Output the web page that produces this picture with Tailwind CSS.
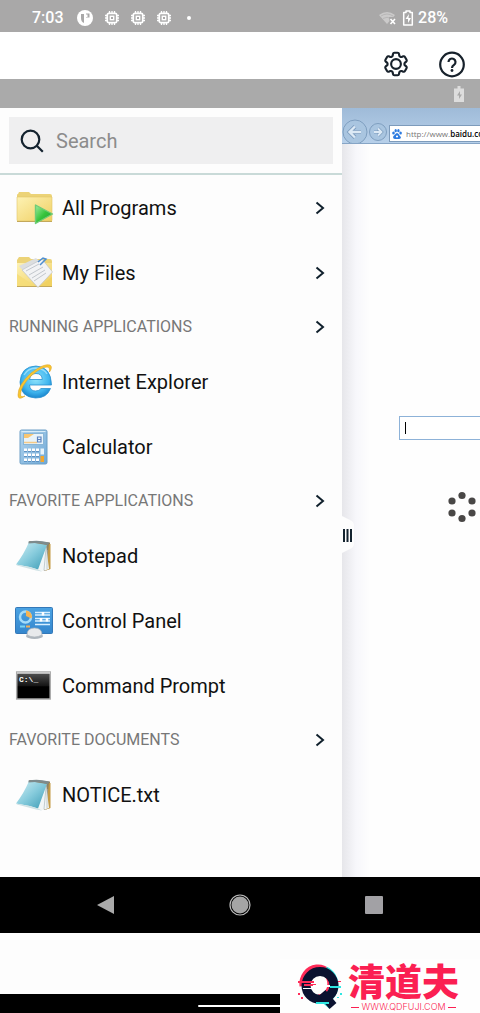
<!DOCTYPE html>
<html lang="en">
<head>
  <meta charset="UTF-8">
  <meta name="viewport" content="width=device-width, initial-scale=1.0">
  <title>Remote Desktop</title>
  <script src="https://cdn.jsdelivr.net/npm/@tailwindcss/browser@4"></script>
</head>
<body class="bg-white font-['Roboto',sans-serif] text-[#111]">
  <!-- Shared icons (kept rendered so the gradients resolve) -->
  <svg class="absolute h-0 w-0" aria-hidden="true">
    <defs>
      <linearGradient id="folder" x1="0" y1="0" x2="1" y2="1">
        <stop offset="0" stop-color="#fdf2b4" />
        <stop offset="1" stop-color="#f0cf62" />
      </linearGradient>
      <linearGradient id="play" x1="0" y1="0" x2="1" y2="1">
        <stop offset="0" stop-color="#a0eda0" />
        <stop offset=".5" stop-color="#38c43c" />
        <stop offset="1" stop-color="#1d9a2c" />
      </linearGradient>
      <linearGradient id="glass" x1="0" y1="0" x2="1" y2="1">
        <stop offset="0" stop-color="#d4f0f5" />
        <stop offset=".5" stop-color="#86cbdc" />
        <stop offset="1" stop-color="#3a9ab4" />
      </linearGradient>
      <linearGradient id="blue" x1="0" y1="0" x2="0" y2="1">
        <stop offset="0" stop-color="#4ba3e3" />
        <stop offset="1" stop-color="#3486cd" />
      </linearGradient>
      <linearGradient id="calc" x1="0" y1="0" x2="1" y2="1">
        <stop offset="0" stop-color="#b4d6ef" />
        <stop offset="1" stop-color="#6ea8d6" />
      </linearGradient>
      <radialGradient id="ie" cx=".5" cy=".4" r=".6">
        <stop offset="0" stop-color="#8fe3fc" />
        <stop offset=".7" stop-color="#3fb5ee" />
        <stop offset="1" stop-color="#1c88cf" />
      </radialGradient>
      <linearGradient id="cmd" x1="0" y1="0" x2="0" y2="1">
        <stop offset="0" stop-color="#555" />
        <stop offset=".5" stop-color="#161616" />
        <stop offset=".55" stop-color="#000" />
      </linearGradient>
    </defs>
    <symbol id="chevron" viewBox="0 0 12 16">
      <path d="M2.5 2.5 9 8l-6.500 5.500" fill="none" stroke="#10202c" stroke-width="2" />
    </symbol>
    <symbol id="chip" viewBox="0 0 14 14">
      <path d="M4.5 0v2M7 0v2M9.5 0v2M4.5 12v2M7 12v2M9.5 12v2M0 4.5h2M0 7h2M0 9.500h2M12 4.5h2M12 7h2M12 9.500h2" stroke="#fff" stroke-width="1.3" />
      <rect x="2.3" y="2.3" width="9.4" height="9.4" rx="1.5" fill="none" stroke="#fff" stroke-width="1.7" />
      <rect x="5.3" y="5.3" width="3.4" height="3.4" fill="none" stroke="#fff" stroke-width="1.4" />
    </symbol>
    <symbol id="notepad" viewBox="0 0 40 40">
      <path d="M15 5 36 6.500V33l-6 2Z" fill="#8d8266" />
      <path d="M35 8h1.500v25L32 34.500Z" fill="#c39a45" />
      <path d="M32 9 35 33l-8 2.500-7-3Z" fill="#f2f6f7" />
      <path d="M32 12 30 34M33 14 33 33" stroke="#b5c2c5" stroke-width=".8" />
      <path d="M15 6 33 9 24 33.500Q13 30 2 28.500Q10 18 15 6Z" fill="url(#glass)" />
      <path d="M2 28.500Q13 30 24 33.500L28 35.500 22 34.500 3 29.500Z" fill="#cfe2e5" />
      <path d="M14.500 5.500Q24 3.500 35 6.500L34 9Q24 6 14.500 7.500Z" fill="#7d8b8d" />
    </symbol>
  </svg>

  <div class="flex min-h-screen flex-col">
    <!-- Phone status bar -->
    <header class="flex h-8 items-center justify-between bg-[#a9a8a8] px-8 pt-1 text-base font-medium text-white">
      <div class="flex items-center gap-3">
        <span class="mr-px">7:03</span>
        <svg class="h-4 w-4" viewBox="0 0 16 16"><circle cx="8" cy="8" r="8" fill="#fff" /><path d="M4 4h3v9Q4 12 4 8ZM9 3.500h3.500v4H9Z" fill="#a9a8a8" /><path d="M9 4.500h1.500V7H9Z" fill="#fff" /></svg>
        <svg class="h-3.5 w-3.5"><use href="#chip" /></svg>
        <svg class="h-3.5 w-3.5"><use href="#chip" /></svg>
        <svg class="h-3.5 w-3.5"><use href="#chip" /></svg>
        <span class="ml-1 h-1 w-1 rounded-full bg-white"></span>
      </div>
      <div class="flex items-center gap-1">
        <svg class="h-4 w-5" viewBox="0 0 20 16"><path d="M1 5Q9-1 17 5L9 14Z" fill="#cbcaca" /><path d="M3 6Q9 2 15 6M5 8.500Q9 6 13 8.500" fill="none" stroke="#b7b6b6" /><path d="M11 7h8v8h-7Z" fill="#a9a8a8" /><path d="m12.500 9 4.500 5m0-5-4.500 5" stroke="#fff" stroke-width="1.6" /></svg>
        <svg class="h-4 w-3" viewBox="0 0 12 16"><path d="M4 1h4v1.500h2.300V15H1.700V2.500H4Z" fill="none" stroke="#fff" stroke-width="1.5" stroke-linejoin="round" /><path d="M7 4 3.500 9H6v4l3-5H6.500Z" fill="#fff" /></svg>
        <span>28%</span>
      </div>
    </header>

    <!-- App toolbar -->
    <div class="flex h-[47px] items-end justify-end gap-[26px] pr-[13px]">
      <button type="button" aria-label="Settings">
        <svg class="block h-[30px] w-[30px]" viewBox="0 0 24 24" fill="none" stroke="#17212b" stroke-width="1.7" stroke-linejoin="round">
          <path d="M9.594 3.94c.09-.542.56-.94 1.11-.94h2.593c.55 0 1.02.398 1.11.94l.213 1.281c.063.374.313.686.645.87.074.04.147.083.22.127.325.196.72.257 1.075.124l1.217-.456a1.125 1.125 0 0 1 1.37.49l1.296 2.247a1.125 1.125 0 0 1-.26 1.431l-1.003.827c-.293.241-.438.613-.43.992a7.723 7.723 0 0 1 0 .255c-.008.378.137.75.43.991l1.004.827c.424.35.534.955.26 1.43l-1.298 2.247a1.125 1.125 0 0 1-1.369.491l-1.217-.456c-.355-.133-.75-.072-1.076.124a6.47 6.47 0 0 1-.22.128c-.331.183-.581.495-.644.869l-.213 1.281c-.09.543-.56.94-1.11.94h-2.594c-.55 0-1.019-.398-1.11-.94l-.213-1.281c-.062-.374-.312-.686-.644-.87a6.52 6.52 0 0 1-.22-.127c-.325-.196-.72-.257-1.076-.124l-1.217.456a1.125 1.125 0 0 1-1.369-.49l-1.297-2.247a1.125 1.125 0 0 1 .26-1.431l1.004-.827c.292-.24.437-.613.43-.991a6.932 6.932 0 0 1 0-.255c.007-.38-.138-.751-.43-.992l-1.004-.827a1.125 1.125 0 0 1-.26-1.43l1.297-2.247a1.125 1.125 0 0 1 1.37-.491l1.216.456c.356.133.751.072 1.076-.124.072-.044.146-.086.22-.128.332-.183.582-.495.644-.869l.214-1.28Z" />
          <circle cx="12" cy="12" r="3.9" />
        </svg>
      </button>
      <button type="button" aria-label="Help">
        <svg class="block h-[30px] w-[30px]" viewBox="0 0 30 30" fill="none" stroke="#17212b" stroke-width="2.2">
          <circle cx="15" cy="15.500" r="11.800" />
          <path d="M11.500 13a3.500 3.500 0 1 1 5.500 2.900c-1.300.9-2 1.400-2 3.100" />
          <circle cx="15" cy="21.500" r="1.4" fill="#17212b" stroke="none" />
        </svg>
      </button>
    </div>

    <div class="flex h-[29px] items-center justify-end bg-[#aaa] pr-4">
      <svg class="h-4 w-2.5" viewBox="0 0 10 16"><path d="M3.500 0h3v2.500H10V16H0V2.500h3.500Z" fill="#ddd" /><path d="m6 5-3 4.500h2V13l3-4.500H6Z" fill="#aaa" /></svg>
    </div>

    <main class="relative flex flex-1 overflow-hidden">
      <!-- Drawer -->
      <aside class="w-[71.25%] shrink-0 bg-[#fdfdfd] pb-12">
        <div class="border-b-2 border-[#c9dad8] px-[9px] py-[9px]">
          <label class="flex h-[47px] items-center gap-3 bg-[#efeff0] pl-[11px]">
            <svg class="h-6 w-6 shrink-0" viewBox="0 0 24 24" fill="none" stroke="#14232f" stroke-width="2.2"><circle cx="10.500" cy="10.500" r="8.800" /><path d="m16.800 16.800 6 6" /></svg>
            <input type="search" aria-label="Search" placeholder="Search" class="min-w-0 flex-1 bg-transparent text-xl outline-none placeholder:text-[#8c8c8c]">
          </label>
        </div>

        <nav>
          <button type="button" class="flex h-[65px] w-full items-center pl-3.5 pr-4 text-xl">
            <svg class="mr-2 h-10 w-10" viewBox="0 0 40 40">
              <path d="M3 33V7q0-1 1-1l1-2h10l2 2h19q2 0 2 2v25Z" fill="#ecd377" />
              <path d="M3 9h35v23q0 1-1 1H4q-1 0-1-1Z" fill="url(#folder)" stroke="#e3c76a" stroke-width=".6" />
              <path d="M3 33.500h35" stroke="#c3a85b" />
              <path d="M21.500 17v18.500L38.500 26Z" fill="url(#play)" stroke="#70cb78" stroke-width="1.4" stroke-linejoin="round" />
            </svg>
            <span>All Programs</span>
            <svg class="ml-auto h-4 w-3"><use href="#chevron" /></svg>
          </button>
          <button type="button" class="flex h-[65px] w-full items-center pl-3.5 pr-4 text-xl">
            <svg class="mr-2 h-10 w-10" viewBox="0 0 40 40">
              <path d="M3 33V7l2-3h10l2 2h19q2 0 2 2v25Z" fill="#ecd377" />
              <path d="M3 10h35v23H3Z" fill="url(#folder)" />
              <path d="M3 33.500h35" stroke="#c3a85b" />
              <path d="m5 13 17-8 9 9-4 14-6 3Z" fill="#dcdedf" />
              <path d="M8 17 28 6l10.500 13L24 34.500Z" fill="#f2f3f5" stroke="#bfc3c7" stroke-width=".7" />
              <path d="m12 18 13-7m-10 11 14-8M18 25l13-8M20 28l12-8" stroke="#c2c7cd" stroke-width="1" />
              <path d="m24 9 5-4 3 1-5 5M26 12l4-4" stroke="#4e8ecf" stroke-width="1.5" fill="none" />
              <path d="M3 21v12h18Z" fill="#f5dc75" opacity=".8" /><path d="M38 24v9H26Z" fill="#efd061" opacity=".9" />
            </svg>
            <span>My Files</span>
            <svg class="ml-auto h-4 w-3"><use href="#chevron" /></svg>
          </button>

          <button type="button" class="flex h-11 w-full items-center justify-between pl-[9px] pr-4 text-base text-[#777]">
            <span>RUNNING APPLICATIONS</span>
            <svg class="h-4 w-3"><use href="#chevron" /></svg>
          </button>
          <button type="button" class="flex h-[65px] w-full items-center pl-3.5 text-xl">
            <svg class="mr-2 h-10 w-10" viewBox="0 0 40 40">
              <path d="M37.500 23H15.500q.5 6 6 6 4 0 5.500-2.500h9.500Q33 36 21.500 36 6 35 6 20 7 4.500 22 4q15 .5 15.500 19ZM15.500 17.500h12.800q-.3-6-6.300-6-5.500 0-6.500 6Z" fill="url(#ie)" fill-rule="evenodd" stroke="#2a91d0" stroke-width=".8" />
              <path d="M10 13Q14 6 22 6q8 .5 11 6" fill="none" stroke="#c6f2ff" stroke-width="1.5" opacity=".6" />
              <path d="M11 34Q4 39 4 33 4 23 17 11 30 1 36 3q3 2-.5 7Q36 5 33 5 27 5 17 14 7 24 6.500 32q0 4 4.500 2Z" fill="#f9c62f" stroke="#dfa529" stroke-width=".6" />
            </svg>
            <span>Internet Explorer</span>
          </button>
          <button type="button" class="flex h-[65px] w-full items-center pl-3.5 text-xl">
            <svg class="mr-2 h-10 w-10" viewBox="0 0 40 40">
              <rect x="6" y="3" width="27" height="34" rx="1.5" fill="url(#calc)" stroke="#6c9fc6" />
              <path d="M7.500 4.500h24" stroke="#d8ecf8" />
              <rect x="9.500" y="6.500" width="20" height="11" fill="#e8f3fa" stroke="#88b5d6" />
              <path d="M10 7h10l-6 4h-4Z" fill="#f8c672" /><path d="M10 15.500h13" stroke="#f5ca86" stroke-width="1.5" />
              <path d="M23.500 10h3.500v5h-3.500Zm0 2.500H27" fill="none" stroke="#5c83bf" stroke-width="1.2" />
              <path d="M10 23h15M10 28h15M10 33h15" stroke="#fff" stroke-width="3" stroke-dasharray="3 1" />
              <path d="M10 24.500h15M10 29.500h15M10 34.500h15" stroke="#5289bc" stroke-width=".9" stroke-dasharray="3 1" />
              <path d="M26.500 21.500h3.500v6h-3.500Z" fill="#e9f4fb" /><path d="M26.500 29h3.500v6h-3.500Z" fill="#f3a72e" />
            </svg>
            <span>Calculator</span>
          </button>

          <button type="button" class="flex h-11 w-full items-center justify-between pl-[9px] pr-4 text-base text-[#777]">
            <span>FAVORITE APPLICATIONS</span>
            <svg class="h-4 w-3"><use href="#chevron" /></svg>
          </button>
          <button type="button" class="flex h-[65px] w-full items-center pl-3.5 text-xl">
            <svg class="mr-2 h-10 w-10"><use href="#notepad" /></svg>
            <span>Notepad</span>
          </button>
          <button type="button" class="flex h-[65px] w-full items-center pl-3.5 text-xl">
            <svg class="mr-2 h-10 w-10" viewBox="0 0 40 40">
              <rect x="1.5" y="6.500" width="37" height="26" rx="1" fill="url(#blue)" stroke="#3478b8" />
              <circle cx="11.500" cy="16" r="5.500" fill="none" stroke="#a4dcfa" stroke-width="2.5" />
              <path d="M12 9.500a6 6 0 0 1 5.500 8L12 15Z" fill="#f5b454" />
              <path d="M6 25.500h5" stroke="#7bd4f4" stroke-width="2" /><path d="M12 25.500h4" stroke="#f3af59" stroke-width="2" />
              <path d="M21 11.500h15M21 14h15M21 17.500h15M21 20h15M21 23.500h15" stroke="#d7efff" stroke-width="1.3" />
              <path d="M29 11v3.500M33 17v3.500M27 17v3.500" stroke="#fff" stroke-width="2.5" />
              <ellipse cx="20.500" cy="35" rx="8.500" ry="3" fill="#aeb6bd" />
              <path d="M13 34q0-7 7.500-7t7.500 7q-7.500 4-15 0Z" fill="#e8eaec" stroke="#aeb5bb" stroke-width=".7" />
            </svg>
            <span>Control Panel</span>
          </button>
          <button type="button" class="flex h-[65px] w-full items-center pl-3.5 text-xl">
            <svg class="mr-2 h-10 w-10" viewBox="0 0 40 40">
              <rect x="2.700" y="6" width="33.500" height="27" fill="url(#cmd)" stroke="#aaa" stroke-width="1.5" />
              <path d="M3 7h33" stroke="#ddd" stroke-width="1.5" />
              <text x="5" y="16" font-family="Liberation Mono, monospace" font-size="8" font-weight="700" fill="#fff">C:\_</text>
            </svg>
            <span>Command Prompt</span>
          </button>

          <button type="button" class="flex h-11 w-full items-center justify-between pl-[9px] pr-4 text-base text-[#777]">
            <span>FAVORITE DOCUMENTS</span>
            <svg class="h-4 w-3"><use href="#chevron" /></svg>
          </button>
          <button type="button" class="flex h-[65px] w-full items-center pl-3.5 text-xl">
            <svg class="mr-2 h-10 w-10"><use href="#notepad" /></svg>
            <span>NOTICE.txt</span>
          </button>
        </nav>
      </aside>

      <!-- Remote browser window -->
      <section class="relative min-w-0 flex-1 overflow-hidden bg-[#fefefe]">
        <div class="absolute inset-y-0 left-0 w-7 bg-linear-to-r from-[#e6e6ea] via-[#f7f7fb] to-transparent"></div>
        <div class="relative flex h-9 items-end border-b border-[#86a5c6] bg-linear-to-b from-[#9fbbd8] to-[#b7d0ea]">
          <button type="button" aria-label="Back">
            <svg class="block h-6 w-[26px]" viewBox="0 0 26 24"><circle cx="13" cy="13" r="12" fill="#a9c5e0" stroke="#7f9fc0" /><path d="M19 13H8m5-5.500L7.500 13l5.500 5.500" fill="none" stroke="#7e9dbf" stroke-width="4" /><path d="M19 13H8m5-5.500L7.500 13l5.500 5.500" fill="none" stroke="#dce9f5" stroke-width="2.4" /></svg>
          </button>
          <button type="button" aria-label="Forward">
            <svg class="block h-6 w-5" viewBox="0 0 20 24"><circle cx="10" cy="13" r="8.500" fill="#a9c5e0" stroke="#7f9fc0" /><path d="M6 13h7m-3-3.500 3.500 3.500-3.500 3.500" fill="none" stroke="#7e9dbf" stroke-width="3.200" /><path d="M6 13h7m-3-3.500 3.500 3.500-3.500 3.500" fill="none" stroke="#dce9f5" stroke-width="1.8" /></svg>
          </button>
          <div role="textbox" contenteditable="true" aria-label="Address" class="mb-px ml-px flex h-[17px] flex-1 items-center gap-1 overflow-hidden border border-r-0 border-[#7d9bbb] bg-white pl-0.5 whitespace-nowrap">
            <svg class="h-2.5 w-2.5 shrink-0" viewBox="0 0 10 10" fill="#2c7be0"><ellipse cx="1.5" cy="4" rx="1.3" ry="1.6" /><ellipse cx="3.700" cy="1.700" rx="1.2" ry="1.6" /><ellipse cx="6.400" cy="1.700" rx="1.2" ry="1.6" /><ellipse cx="8.600" cy="4" rx="1.3" ry="1.6" /><path d="M5 4q1.200 0 2 1.500T9 8q0 2-2 2H3Q1 10 1 8q0-1 2-2.500Q4 4 5 4Z" /><circle cx="5" cy="7.500" r="1.1" fill="#fff" /></svg>
            <span class="font-['Open_Sans',sans-serif] text-[8px] leading-3 text-[#777]">http://www.<span class="font-semibold text-black">baidu.co</span></span>
          </div>
        </div>
        <form class="relative mt-[272px] ml-[57px]">
          <label class="flex h-6 items-center border border-r-0 border-[#8db2d8] bg-white pl-[5px]">
            <span class="h-3 w-px bg-black"></span>
            <input type="text" aria-label="Web search" class="min-w-0 flex-1 bg-transparent text-sm outline-none">
          </label>
        </form>
        <div class="mt-[51px] flex justify-end pr-1">
          <svg class="h-8 w-7" viewBox="0 0 28 32" fill="#494746" role="img" aria-label="Loading"><circle cx="14" cy="4.500" r="3.600" /><circle cx="4" cy="10" r="3.600" /><circle cx="24" cy="10" r="3.600" /><circle cx="4" cy="22" r="3.600" /><circle cx="24" cy="22" r="3.600" /><circle cx="14" cy="27.500" r="3.600" /></svg>
        </div>
      </section>

      <!-- Drawer handle -->
      <button type="button" aria-label="Close drawer" class="absolute top-[407px] left-[71.25%]">
        <svg class="block h-10 w-3" viewBox="0 0 12 40"><path d="M0 1 8 5q4 2 4 5v19q0 3-4 5l-8 4Z" fill="#fdfdfd" /><path d="M2 14v13M5.500 14v13M9 14v13" stroke="#14232f" stroke-width="2" /></svg>
      </button>
    </main>

    <!-- Android navigation of the remote session -->
    <div class="flex h-14 items-center justify-around bg-black px-10">
      <button type="button" aria-label="Back"><svg class="block h-5 w-5" viewBox="0 0 20 20"><path d="M18 1v18L1 10Z" fill="#aaa" /></svg></button>
      <button type="button" aria-label="Home"><svg class="block h-6 w-6" viewBox="0 0 24 24"><circle cx="12" cy="12" r="8.500" fill="#a5a5a5" /><circle cx="12" cy="12" r="10" fill="none" stroke="#bbb" stroke-width="1.2" /></svg></button>
      <button type="button" aria-label="Recent apps"><svg class="block h-5 w-5" viewBox="0 0 20 20"><rect x="1" y="1" width="18" height="18" rx="1" fill="#a2a1a5" /></svg></button>
    </div>

    <footer class="relative flex h-20 flex-col justify-end bg-[#fdfdfd]">
      <div class="flex h-[19px] items-center justify-center bg-black">
        <span class="mt-1 h-0.5 w-[84px] rounded bg-white"></span>
      </div>
      <a href="#" class="absolute right-0 bottom-0 flex h-[54px] w-[200px] items-center bg-[#fefefe] pl-4">
        <svg class="h-12 w-12 shrink-0" viewBox="0 0 48 48" aria-hidden="true">
          <g fill="none" stroke-width="9">
            <path d="M8 24a14 15 0 1 1 14 13" stroke="#ff2b58" />
            <path d="M29 9a14 15 0 0 1 0 28l7 6" stroke="#2fe6e2" />
            <circle cx="24" cy="23.500" r="14" stroke="#0b1230" />
            <path d="m26 31 11 13" stroke="#0b1230" />
          </g>
          <path d="M2 19h16v2H2ZM8 22h12v2H8Z" fill="#ff2b58" /><path d="M17 23h17v2H17ZM7 26h10v1H7Z" fill="#fff" />
          <path d="M34 24h11v2H34ZM20 40h13v2H20Z" fill="#2fe6e2" />
          <path d="M2 31h2v2H2ZM5 35h2v2H5ZM42 19h3v1h-3Z" fill="#ff2b58" /><path d="M44 31h2v2h-2ZM41 35h2v1h-2Z" fill="#2fe6e2" />
        </svg>
        <span class="ml-1 flex flex-col items-center text-[#fb1f52]">
          <span lang="zh" class="font-['Noto_Sans_CJK_SC',sans-serif] text-[37px] leading-[42px] font-black">清道夫</span>
          <span class="flex items-center gap-0.5 font-['Inter',sans-serif] text-[9px] leading-3 font-light"><span class="h-px w-2 bg-[#fb1f52]"></span>WWW.QDFUJI.COM<span class="h-px w-2 bg-[#fb1f52]"></span></span>
        </span>
      </a>
    </footer>
  </div>
</body>
</html>
